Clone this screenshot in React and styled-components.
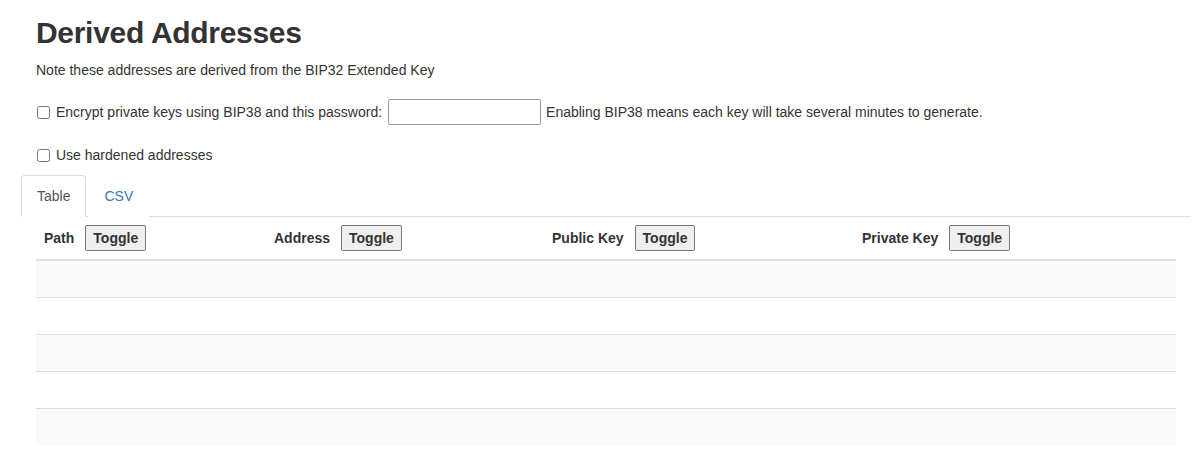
import React from 'react';
import styled, { createGlobalStyle } from 'styled-components';

const GlobalStyle = createGlobalStyle`
  body {
    margin: 0;
    background: #fff;
    font-family: "Liberation Sans", Arial, sans-serif;
    font-size: 14px;
    line-height: 20px;
    color: #333;
  }
`;

const Container = styled.div`
  width: 1170px;
  margin-left: 21px;
`;

const Heading = styled.h2`
  margin: 16px 15px 11px;
  font-size: 30px;
  line-height: 33px;
  font-weight: 700;
  letter-spacing: -0.3px;
`;

const Note = styled.p`
  margin: 0 15px;
  font-size: 14px;
  line-height: 20px;
`;

const OptionRow = styled.label`
  display: flex;
  align-items: center;
  margin: ${p => p.$top}px 15px 0;
  font-size: 14px;
  height: ${p => p.$height}px;
`;

const Check = styled.input.attrs({ type: 'checkbox' })`
  width: 13px;
  height: 13px;
  margin: 0 6px 0 1px;
`;

const Password = styled.input.attrs({ type: 'password' })`
  box-sizing: border-box;
  width: 153px;
  height: 26px;
  margin: 0 5px 0 6px;
  border: 1px solid #999;
  border-radius: 2px;
`;

const Tabs = styled.ul`
  display: flex;
  list-style: none;
  margin: 10px 0 0;
  padding: 0;
  border-bottom: 1px solid #ddd;
`;

const Tab = styled.li`
  margin-right: 2px;
  margin-bottom: -1px;
  padding: 10px 15px;
  border: 1px solid ${p => (p.$active ? '#ddd' : 'transparent')};
  border-bottom-color: ${p => (p.$active ? '#fff' : 'transparent')};
  border-radius: 4px 4px 0 0;
  background: #fff;
  color: ${p => (p.$active ? '#555' : '#337ab7')};
  font-size: 14px;
`;

const Pane = styled.div`
  padding: 0 15px;
`;

const Table = styled.table`
  width: 100%;
  table-layout: fixed;
  border-collapse: collapse;
  border-spacing: 0;
`;

const Th = styled.th`
  box-sizing: border-box;
  width: ${p => p.$width}px;
  padding: 8px;
  text-align: left;
  font-size: 14px;
  font-weight: 700;
  border-bottom: 2px solid #ddd;
  vertical-align: middle;
`;

const Row = styled.tr`
  background: ${p => (p.$odd ? '#f9f9f9' : '#fff')};
`;

const Td = styled.td`
  padding: 8px;
  height: 20px;
  border-top: 1px solid #ddd;
`;

const ToggleButton = styled.button`
  margin-left: 11px;
  padding: 3px 7px;
  font-family: "Liberation Sans", Arial, sans-serif;
  font-size: 14px;
  font-weight: 700;
  line-height: 18px;
  color: #333;
  background: #efefef;
  border: 1px solid #767676;
  border-radius: 2px;
`;

const columns = [
  { name: 'Path', width: 230 },
  { name: 'Address', width: 278 },
  { name: 'Public Key', width: 310 },
  { name: 'Private Key', width: 322 }
];

export default function App() {
  const rows = [0, 1, 2, 3, 4];
  return (
    <Container>
      <GlobalStyle />
      <Heading>Derived Addresses</Heading>
      <Note>Note these addresses are derived from the BIP32 Extended Key</Note>
      <OptionRow $top={19} $height={26}>
        <Check />
        Encrypt private keys using BIP38 and this password:
        <Password />
        Enabling BIP38 means each key will take several minutes to generate.
      </OptionRow>
      <OptionRow $top={20} $height={20}>
        <Check />
        Use hardened addresses
      </OptionRow>
      <Tabs>
        <Tab $active>Table</Tab>
        <Tab>CSV</Tab>
      </Tabs>
      <Pane>
        <Table>
          <thead>
            <tr>
              {columns.map(c => (
                <Th key={c.name} $width={c.width}>
                  {c.name}
                  <ToggleButton>Toggle</ToggleButton>
                </Th>
              ))}
            </tr>
          </thead>
          <tbody>
            {rows.map(i => (
              <Row key={i} $odd={i % 2 === 0}>
                {columns.map(c => <Td key={c.name}>&nbsp;</Td>)}
              </Row>
            ))}
          </tbody>
        </Table>
      </Pane>
    </Container>
  );
}
